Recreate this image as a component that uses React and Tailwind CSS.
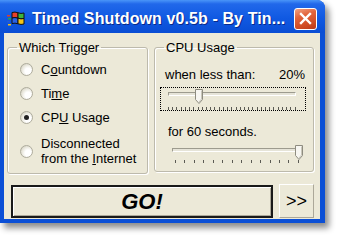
import React from "react";

const WinFlag = () => (
  <svg width="18" height="16" viewBox="0 0 18 16" className="shrink-0">
    <rect x="0" y="4" width="3" height="1.5" fill="#e23b2a" />
    <rect x="1" y="7" width="3" height="1.5" fill="#2fa83a" />
    <rect x="0" y="10" width="3" height="1.5" fill="#2458d8" />
    <rect x="1" y="13" width="3" height="1.5" fill="#f2c21b" />
    <path d="M5 1.5 Q8 0.5 11 1.8 L11 7.2 Q8 6 5 7 Z" fill="#e8402a" stroke="#111" strokeWidth="1" />
    <path d="M11 1.8 Q14 3 17 2 L17 7.5 Q14 8.4 11 7.2 Z" fill="#3cb43c" stroke="#111" strokeWidth="1" />
    <path d="M5 7 Q8 6 11 7.2 L11 12.8 Q8 11.6 5 12.6 Z" fill="#2a62e6" stroke="#111" strokeWidth="1" />
    <path d="M11 7.2 Q14 8.4 17 7.5 L17 13 Q14 14 11 12.8 Z" fill="#f5c518" stroke="#111" strokeWidth="1" />
  </svg>
);

const CloseButton = () => (
  <div className="flex h-[22px] w-[23px] items-center justify-center rounded-[3px] border border-white bg-[linear-gradient(160deg,#f0a283_0%,#e2643c_35%,#cf4a22_75%,#b9381a_100%)]">
    <svg width="13" height="13" viewBox="0 0 13 13">
      <path d="M2 2 L11 11 M11 2 L2 11" stroke="#fff" strokeWidth="2.4" strokeLinecap="square" />
    </svg>
  </div>
);

const Radio = ({ checked }) => (
  <span className="flex h-[13px] w-[13px] shrink-0 items-center justify-center rounded-full border border-[#aeac9d] bg-[radial-gradient(circle_at_65%_65%,#ffffff_30%,#e6e4d8_65%,#bdbbad_100%)]">
    {checked && <span className="h-[5px] w-[5px] rounded-full bg-[#222]" />}
  </span>
);

const Option = ({ checked, children, className = "" }) => (
  <div className={`flex items-center gap-[8px] ${className}`}>
    <Radio checked={checked} />
    <div className="text-[13px] leading-[15px] text-black">{children}</div>
  </div>
);

const Slider = ({ thumbLeft, ticks, tickClass = "" }) => (
  <div className="relative">
    <div className="h-[4px] border-t border-l border-[#9d9b8e] border-b border-r border-b-white border-r-white bg-[#e6e4d8]" />
    <div className="absolute top-[-3px]" style={{ left: thumbLeft }}>
      <svg width="8" height="15" viewBox="0 0 8 15">
        <path d="M0.5 0.5 H7.5 V10.5 L4 14.5 L0.5 10.5 Z" fill="#f7f6f1" stroke="#8e8c80" strokeWidth="1" />
        <path d="M6.5 1.5 V10 L4 13" fill="none" stroke="#c9c7ba" strokeWidth="1" />
      </svg>
    </div>
    <div className={`flex justify-between ${tickClass}`}>
      {Array.from({ length: ticks }).map((_, i) => (
        <span key={i} className="h-[3px] w-px bg-[#5c5b54]" />
      ))}
    </div>
  </div>
);

const GroupBox = ({ title, className = "", children }) => (
  <fieldset
    className={`rounded-[3px] border border-[#bdbaac] shadow-[inset_1px_1px_0_#fff,1px_1px_0_#fff] ${className}`}
  >
    <legend className="ml-[9px] px-[2px] text-[13px] leading-[13px] text-black">{title}</legend>
    {children}
  </fieldset>
);

export default function App() {
  return (
    <div className="h-[238px] w-[340px] overflow-hidden bg-white font-['Liberation_Sans',Arial,sans-serif]">
      <div className="flex h-[223px] w-[325px] flex-col rounded-tr-[8px] bg-[#0b4fd6] shadow-[4px_5px_6px_rgba(0,0,0,0.45)]">
        {/* title bar */}
        <div className="flex h-[33px] items-center rounded-tr-[8px] bg-[linear-gradient(180deg,#4a95f8_0%,#2168ea_12%,#1059e2_55%,#0a4dd4_100%)] pl-[7px] pr-[8px] pt-[4px]">
          <WinFlag />
          <div className="ml-[7px] flex-1 whitespace-nowrap text-[16px] font-bold leading-[20px] tracking-[0.1px] text-white [text-shadow:1px_1px_0_#0a2a8a]">
            Timed Shutdown v0.5b - By Tin...
          </div>
          <CloseButton />
        </div>

        {/* client area */}
        <div className="mb-[4px] ml-[4px] mr-[5px] flex flex-1 flex-col bg-[#ece9d8] pl-[3px] pt-[8px]">
          <div className="flex items-start gap-[6px]">
            <GroupBox title="Which Trigger" className="h-[133px] w-[141px]">
              <div className="flex flex-col pl-[12px] pt-[8px]">
                <Option>
                  C<u>o</u>untdown
                </Option>
                <Option className="mt-[9px]">
                  Ti<u>m</u>e
                </Option>
                <Option checked className="mt-[9px]">
                  CP<u>U</u> Usage
                </Option>
                <Option className="mt-[11px]">
                  Disconnected
                  <br />
                  from the <u>I</u>nternet
                </Option>
              </div>
            </GroupBox>

            <GroupBox title="CPU Usage" className="h-[131px] w-[160px]">
              <div className="flex flex-col">
                <div className="mt-[13px] flex justify-between pl-[10px] pr-[8px] text-[13px] leading-[16px] text-black">
                  <span>when less than:</span>
                  <span>20%</span>
                </div>
                <div className="ml-[5px] mr-[7px] mt-[4px] h-[24px] border border-dotted border-black pl-[7px] pr-[9px] pt-[4px]">
                  <Slider thumbLeft="calc(20% + 1px)" ticks={31} tickClass="mt-[11px]" />
                </div>
                <div className="mt-[13px] pl-[13px] text-[13px] leading-[16px] text-black">
                  for 60 seconds.
                </div>
                <div className="ml-[17px] mr-[12px] mt-[8px]">
                  <Slider thumbLeft="calc(100% - 6px)" ticks={14} tickClass="mt-[8px] pl-[3px] pr-[2px]" />
                </div>
              </div>
            </GroupBox>
          </div>

          {/* buttons */}
          <div className="mt-[11px] flex gap-[6px] pl-[4px]">
            <button className="flex h-[33px] w-[262px] items-center justify-center border-2 border-[#1a1a1a] bg-[#ece9d8] shadow-[inset_1px_1px_0_#fff,inset_-1px_-1px_0_#aca899]">
              <span className="text-[22px] font-bold italic leading-none text-black">GO!</span>
            </button>
            <button className="flex h-[34px] w-[35px] -translate-y-px items-center justify-center border border-t-white border-l-white border-b-[#aca899] border-r-[#aca899] bg-[#ece9d8]">
              <span className="text-[18px] leading-none text-black">&gt;&gt;</span>
            </button>
          </div>
        </div>
      </div>
    </div>
  );
}
